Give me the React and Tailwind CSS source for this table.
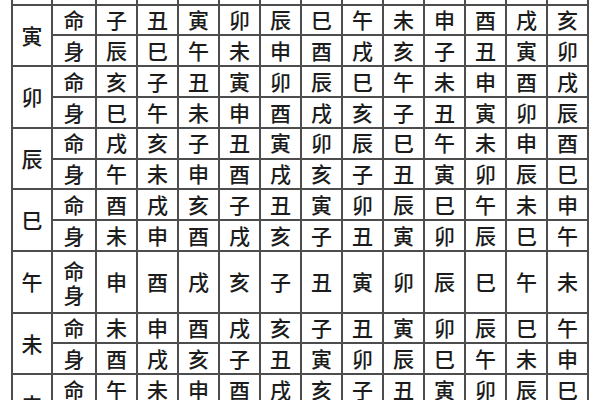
import React from "react";

const BR = ["子", "丑", "寅", "卯", "辰", "巳", "午", "未", "申", "酉", "戌", "亥"];

// label, 命 start, 身 start
const groups = [
    { label: "丑", ming: 1, shen: 3 },
    { label: "寅", ming: 0, shen: 4 },
    { label: "卯", ming: 11, shen: 5 },
    { label: "辰", ming: 10, shen: 6 },
    { label: "巳", ming: 9, shen: 7 },
    { label: "午", ming: 8, shen: 8 },
    { label: "未", ming: 7, shen: 9 },
    { label: "申", ming: 6, shen: 10 },
];

const seq = (start) => Array.from({ length: 12 }, (_, i) => BR[(start + i) % 12]);

const cell = "flex items-center justify-center border-r-2 border-b-2 border-[#4d4d4d]";

const App = () => (
    <div className="w-[600px] h-[400px] overflow-hidden bg-white">
        <div
            className="ml-[11px] mt-[-58px] w-fit grid grid-cols-[40px_44px_repeat(12,41px)] auto-rows-[30.8px] border-l-2 border-t-2 border-[#4d4d4d] text-[21px] text-[#1c1c1c] font-medium"
            style={{ fontFamily: '"Noto Sans CJK SC", "Noto Sans CJK TC", serif' }}
        >
            {groups.map((g) => {
                const merged = g.ming === g.shen;
                return (
                    <React.Fragment key={g.label}>
                        <div className={`${cell} row-span-2`}>{g.label}</div>
                        {merged ? (
                            <>
                                <div className={`${cell} row-span-2 flex-col leading-[24px]`}>
                                    <span>命</span>
                                    <span>身</span>
                                </div>
                                {seq(g.ming).map((b, i) => (
                                    <div key={i} className={`${cell} row-span-2`}>{b}</div>
                                ))}
                            </>
                        ) : (
                            <>
                                <div className={cell}>命</div>
                                {seq(g.ming).map((b, i) => (
                                    <div key={"m" + i} className={cell}>{b}</div>
                                ))}
                                <div className={cell}>身</div>
                                {seq(g.shen).map((b, i) => (
                                    <div key={"s" + i} className={cell}>{b}</div>
                                ))}
                            </>
                        )}
                    </React.Fragment>
                );
            })}
        </div>
    </div>
);

export default App;
